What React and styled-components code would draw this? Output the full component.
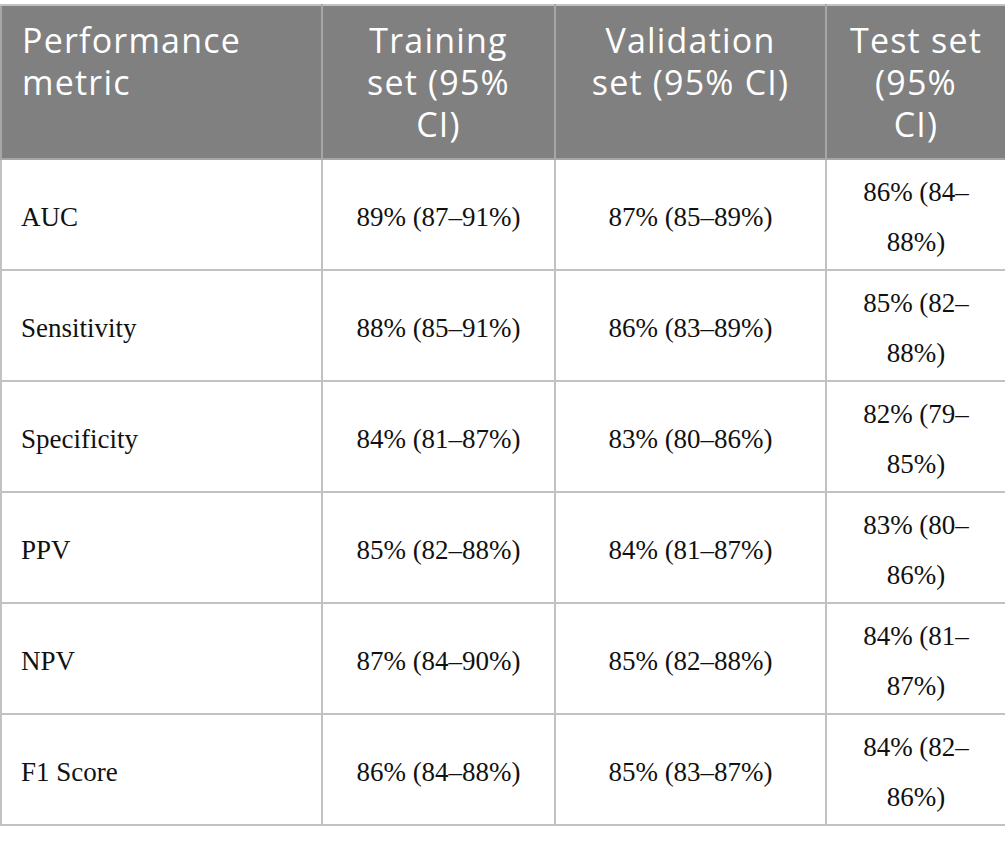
import React from "react";
import styled, { createGlobalStyle } from "styled-components";

const GlobalStyle = createGlobalStyle`
  html, body {
    margin: 0;
    padding: 0;
    background: #ffffff;
  }
`;

// header labels keep the line breaks of the printed table
const columns = [
  { label: "Performance\nmetric", width: 321, align: "left" },
  { label: "Training\nset (95%\nCI)", width: 233, align: "center" },
  { label: "Validation\nset (95% CI)", width: 271, align: "center" },
  { label: "Test set\n(95%\nCI)", width: 180, align: "center" },
];

const rows = [
  ["AUC", "89% (87–91%)", "87% (85–89%)", "86% (84–88%)"],
  ["Sensitivity", "88% (85–91%)", "86% (83–89%)", "85% (82–88%)"],
  ["Specificity", "84% (81–87%)", "83% (80–86%)", "82% (79–85%)"],
  ["PPV", "85% (82–88%)", "84% (81–87%)", "83% (80–86%)"],
  ["NPV", "87% (84–90%)", "85% (82–88%)", "84% (81–87%)"],
  ["F1 Score", "86% (84–88%)", "85% (83–87%)", "84% (82–86%)"],
];

function App() {
  return (
    <Page>
      <GlobalStyle />
      <Table>
        <colgroup>
          {columns.map((c) => (
            <col key={c.label} style={{ width: c.width }} />
          ))}
        </colgroup>
        <thead>
          <HeadRow>
            {columns.map((c) => (
              <HeadCell key={c.label} $align={c.align}>
                {c.label}
              </HeadCell>
            ))}
          </HeadRow>
        </thead>
        <tbody>
          {rows.map((r) => (
            <BodyRow key={r[0]}>
              {r.map((v, i) => (
                <Cell key={i} $align={columns[i].align}>
                  {v}
                </Cell>
              ))}
            </BodyRow>
          ))}
        </tbody>
      </Table>
    </Page>
  );
}

export default App;

const Page = styled.div`
  padding-top: 4px;
  width: 1005px;
`;

const Table = styled.table`
  width: 1005px;
  table-layout: fixed;
  border-collapse: collapse;
  border: 2px solid #c2c2c2;
`;

const HeadRow = styled.tr`
  height: 152px;
  background: #7f807f;
`;

const HeadCell = styled.th`
  vertical-align: top;
  text-align: ${(p) => p.$align};
  white-space: pre-line;
  padding: 13px 20px;
  border: 2px solid #a6a6a6;
  border-top-color: #c2c2c2;
  font-family: "Open Sans", sans-serif;
  font-weight: 400;
  font-size: 34px;
  line-height: 42px;
  letter-spacing: 1.2px;
  color: #ffffff;
`;

const BodyRow = styled.tr`
  height: 111px;
`;

const Cell = styled.td`
  vertical-align: middle;
  text-align: ${(p) => p.$align};
  padding: 6px 19px 2px;
  border: 2px solid #c2c2c2;
  font-family: "Liberation Serif", serif;
  font-size: 27px;
  line-height: 50px;
  color: #111111;
`;
